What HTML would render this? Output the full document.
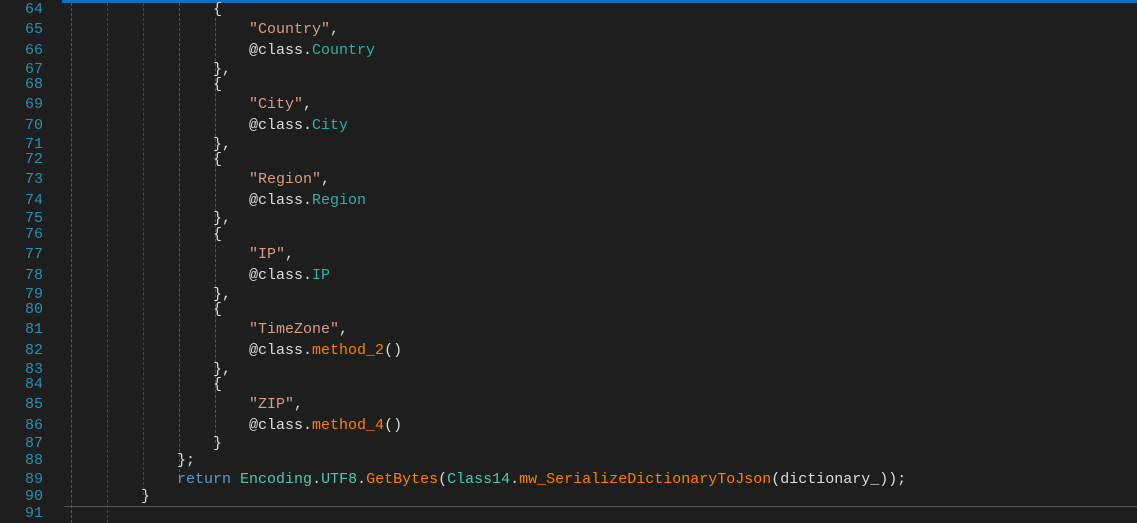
<!DOCTYPE html>
<html><head><style>
body{margin:0;width:1137px;height:523px;background:#1e1e1e;overflow:hidden;position:relative;font-family:"Liberation Mono",monospace;font-size:15px;}
.top{position:absolute;left:62px;top:0;width:1075px;height:3px;background:#0e70c0}
.n{position:absolute;left:0;width:43px;text-align:right;color:#2b91af;line-height:18px}
.l{position:absolute;left:105px;color:#dcdcdc;white-space:pre;line-height:18px}
.g{position:absolute;top:3px;bottom:0;width:0;border-left:1px dashed}
.s{color:#d69d85}.k{color:#569cd6}.t{color:#4ec9b0}.p{color:#2fb1a4}.m{color:#ff8000}
.sep{position:absolute;left:64px;right:0;top:506px;height:1px;background:#555}
</style></head><body>
<div class="top"></div>
<div class="g" style="left:71px;border-color:#555"></div>
<div class="g" style="left:107px;border-color:#2f5a45"></div>
<div class="g" style="left:143px;border-color:#2d4a66;bottom:28px"></div>
<div class="g" style="left:179px;border-color:#555;bottom:46px"></div>
<div class="g" style="left:215px;border-color:#555;top:18px;bottom:80px"></div>
<div class="sep"></div>
<div id="c"></div>
<script>
var L=[
[64,10,'            {'],
[65,30,'                <span class="s">"Country"</span>,'],
[66,51,'                @class.<span class="p">Country</span>'],
[67,70,'            },'],
[68,85,'            {'],
[69,105,'                <span class="s">"City"</span>,'],
[70,126,'                @class.<span class="p">City</span>'],
[71,145,'            },'],
[72,160,'            {'],
[73,180,'                <span class="s">"Region"</span>,'],
[74,201,'                @class.<span class="p">Region</span>'],
[75,219,'            },'],
[76,235,'            {'],
[77,255,'                <span class="s">"IP"</span>,'],
[78,276,'                @class.<span class="p">IP</span>'],
[79,295,'            },'],
[80,310,'            {'],
[81,330,'                <span class="s">"TimeZone"</span>,'],
[82,351,'                @class.<span class="m">method_2</span>()'],
[83,370,'            },'],
[84,385,'            {'],
[85,405,'                <span class="s">"ZIP"</span>,'],
[86,426,'                @class.<span class="m">method_4</span>()'],
[87,444,'            }'],
[88,461,'        };'],
[89,480,'        <span class="k">return</span> <span class="t">Encoding</span>.<span class="t">UTF8</span>.<span class="m">GetBytes</span>(<span class="t">Class14</span>.<span class="m">mw_SerializeDictionaryToJson</span>(dictionary_));'],
[90,497,'    }'],
[91,514,'']];
var h='';L.forEach(function(a){h+='<div class="n" style="top:'+(a[1]-9)+'px">'+a[0]+'</div><div class="l" style="top:'+(a[1]-9)+'px">'+a[2]+'</div>';});
document.getElementById('c').innerHTML=h;
</script>
</body></html>
